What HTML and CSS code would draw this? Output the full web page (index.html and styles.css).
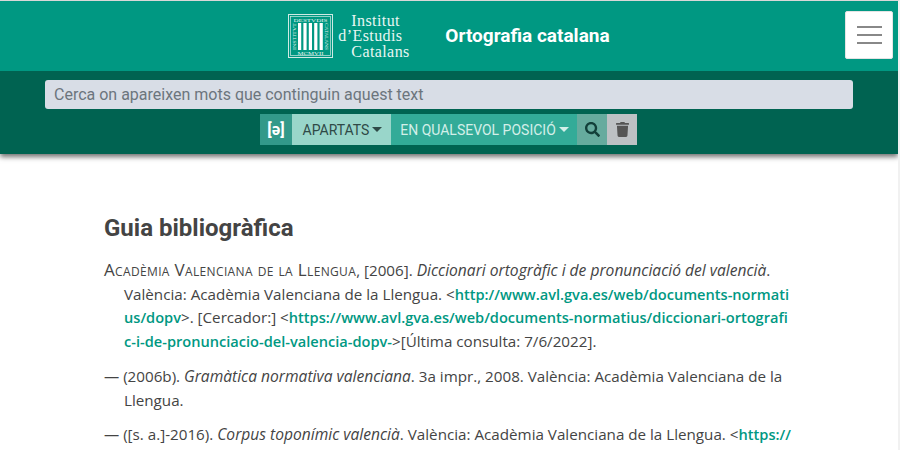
FILE: index.html
```html
<!DOCTYPE html>
<html lang="ca">
<head>
    <meta charset="UTF-8">
    <title>Ortografia catalana</title>
    <link rel="stylesheet" href="styles.css">
</head>
<body>
    <header class="site-header">
        <div class="top-bar">
            <div class="brand">
                <svg class="logo-mark" width="45" height="44" viewBox="0 0 45 44">
                    <rect x="0.5" y="0.5" width="44" height="43" fill="none" stroke="#cfeae4" stroke-width="1"/>
                    <rect x="2.5" y="2.5" width="40" height="39" fill="none" stroke="#cfeae4" stroke-width="0.7"/>
                    <rect x="10" y="9" width="3.200" height="27" fill="#fff"/>
                    <rect x="15.400" y="9" width="3.200" height="27" fill="#fff"/>
                    <rect x="20.800" y="9" width="3.200" height="27" fill="#fff"/>
                    <rect x="26.200" y="9" width="3.200" height="27" fill="#fff"/>
                    <rect x="31.600" y="9" width="3.200" height="27" fill="#fff"/>
                    <text x="22.500" y="8" class="logo-small" text-anchor="middle" textLength="34" lengthAdjust="spacingAndGlyphs">DESTVDIS</text>
                    <text x="22.500" y="41" class="logo-small" text-anchor="middle" textLength="26" lengthAdjust="spacingAndGlyphs">MCMVII</text>
                    <text class="logo-small" text-anchor="middle" textLength="27" lengthAdjust="spacingAndGlyphs" transform="translate(8 22.500) rotate(-90)">INSTITVT</text>
                    <text class="logo-small" text-anchor="middle" textLength="27" lengthAdjust="spacingAndGlyphs" transform="translate(37 22.500) rotate(90)">CATALANS</text>
                </svg>
                <div class="logo-text">
                    <span class="logo-indent">Institut</span>
                    <span>d’Estudis</span>
                    <span class="logo-indent">Catalans</span>
                </div>
                <div class="site-title">Ortografia catalana</div>
            </div>
            <button class="menu-btn" aria-label="Menú">
                <span></span><span></span><span></span>
            </button>
        </div>
        <div class="search-bar">
            <input class="search-input" type="text" placeholder="Cerca on apareixen mots que continguin aquest text">
            <div class="search-tools">
                <button class="tool tool-ipa">[ə]</button>
                <button class="tool tool-sections">APARTATS<i class="caret"></i></button>
                <button class="tool tool-position">EN QUALSEVOL POSICIÓ<i class="caret"></i></button>
                <button class="tool tool-search" aria-label="Cerca">
                    <svg width="15" height="15" viewBox="0 0 512 512"><path fill="currentColor" d="M505 442.700L405.300 343c-4.500-4.500-10.600-7-17-7H372c27.600-35.300 44-79.700 44-128C416 93.100 322.900 0 208 0S0 93.100 0 208s93.100 208 208 208c48.300 0 92.700-16.400 128-44v16.300c0 6.400 2.500 12.500 7 17l99.700 99.700c9.400 9.400 24.600 9.400 33.900 0l28.300-28.300c9.400-9.400 9.400-24.600.1-34zM208 336c-70.700 0-128-57.200-128-128 0-70.700 57.200-128 128-128 70.700 0 128 57.200 128 128 0 70.700-57.200 128-128 128z"/></svg>
                </button>
                <button class="tool tool-clear" aria-label="Esborra">
                    <svg width="13" height="15" viewBox="0 0 448 512"><path fill="currentColor" d="M432 32H312l-9.400-18.700A24 24 0 0 0 281.100 0H166.800a23.700 23.700 0 0 0-21.400 13.300L136 32H16A16 16 0 0 0 0 48v32a16 16 0 0 0 16 16h416a16 16 0 0 0 16-16V48a16 16 0 0 0-16-16zM53.200 467a48 48 0 0 0 47.900 45h245.800a48 48 0 0 0 47.900-45L416 128H32z"/></svg>
                </button>
            </div>
        </div>
    </header>

    <main class="content">
        <h1>Guia bibliogràfica</h1>
        <p class="ref"><span class="author">Acadèmia Valenciana de la Llengua</span>, [2006]. <em>Diccionari ortogràfic i de pronunciació del valencià</em>. València: Acadèmia Valenciana de la Llengua. &lt;<a href="#">http://www.avl.gva.es/web/documents-normati<br>us/dopv</a>&gt;. [Cercador:] &lt;<a href="#">https://www.avl.gva.es/web/documents-normatius/diccionari-ortografi<br>c-i-de-pronunciacio-del-valencia-dopv-</a>&gt;[Última consulta: 7/6/2022].</p>
        <p class="ref">— (2006b). <em>Gramàtica normativa valenciana</em>. 3a impr., 2008. València: Acadèmia Valenciana de la Llengua.</p>
        <p class="ref">— ([s. a.]-2016). <em>Corpus toponímic valencià</em>. València: Acadèmia Valenciana de la Llengua. &lt;<a href="#">https://www.avl.gva.es/</a>&gt;</p>
    </main>
</body>
</html>
```

FILE: styles.css
```css
* {
    box-sizing: border-box;
}
html, body {
    margin: 0;
    height: 450px;
    overflow: hidden;
}
body {
    font-family: "Open Sans", sans-serif;
    background: #fff;
    color: #444;
    border-top: 1px solid #d8d8d8;
    border-right: 2px solid #f1f1f1;
}
.site-header {
    box-shadow: 0 3px 5px rgba(0,0,0,0.55);
}
.top-bar {
    height: 70px;
    background: #009882;
    position: relative;
    display: flex;
    justify-content: center;
}
.brand {
    display: flex;
    align-items: center;
    color: #fff;
}
.logo-mark {
    margin-right: 5px;
}
.logo-small {
    font: 5px "Liberation Serif", serif;
    fill: #e4f4f0;
}
.logo-text {
    font-family: "Liberation Serif", serif;
    font-size: 16px;
    line-height: 15.500px;
    letter-spacing: 0.4px;
    color: #e8f6f3;
    display: flex;
    flex-direction: column;
    width: 72px;
    white-space: nowrap;
}
.logo-indent {
    padding-left: 13px;
}
.site-title {
    font-family: Roboto, sans-serif;
    font-weight: 700;
    font-size: 19px;
    margin-left: 35px;
    padding-bottom: 2px;
}
.menu-btn {
    position: absolute;
    top: 10px;
    right: 5px;
    width: 48px;
    height: 48px;
    background: #fff;
    border: 1px solid #e4e4e4;
    border-radius: 2px;
    display: flex;
    flex-direction: column;
    align-items: center;
    justify-content: center;
    gap: 6px;
    padding: 0;
}
.menu-btn span {
    display: block;
    width: 25px;
    height: 2px;
    background: #888;
}
.search-bar {
    height: 83px;
    background: #006351;
    padding: 9px 45px 0;
    display: flex;
    flex-direction: column;
}
.search-input {
    height: 29px;
    width: 100%;
    border: none;
    border-radius: 3px;
    background: #d8dde6;
    padding: 0 9px;
    font-family: Roboto, sans-serif;
    font-size: 16px;
    outline: none;
}
.search-input::placeholder {
    color: #6c757d;
    opacity: 1;
}
.search-tools {
    display: flex;
    justify-content: center;
    margin-top: 5px;
    padding-right: 1px;
}
.tool {
    height: 31px;
    border: none;
    padding: 0;
    font-family: Roboto, sans-serif;
    font-size: 14px;
    display: flex;
    align-items: center;
    justify-content: center;
}
.tool-ipa {
    width: 32px;
    background: #33998a;
    color: #fff;
    font-weight: 700;
    font-size: 16px;
}
.tool-sections {
    width: 99px;
    padding-left: 2px;
    background: #99d6ca;
    color: #2f4a47;
}
.tool-position {
    width: 186px;
    padding-left: 1px;
    background: #33ab98;
    color: #d4efe9;
}
.tool-search {
    width: 30px;
    background: #66ab9e;
    color: #123f3a;
}
.tool-clear {
    width: 30px;
    background: #bdc1c4;
    color: #555;
}
.caret {
    display: inline-block;
    margin-left: 3px;
    border-top: 5px solid currentColor;
    border-left: 5px solid transparent;
    border-right: 5px solid transparent;
}
.content {
    padding: 0 102px 0 104px;
}
h1 {
    font-family: Roboto, sans-serif;
    font-weight: 700;
    font-size: 24px;
    line-height: 29px;
    margin: 60px 0 15px;
    color: #444;
}
.ref {
    font-size: 15.200px;
    line-height: 23.700px;
    margin: 0 0 11px;
    padding-left: 20px;
    text-indent: -20px;
}
.ref em {
    font-size: 15.600px;
}
.author {
    font-variant: small-caps;
    font-size: 17px;
    letter-spacing: 0.35px;
}
.ref a {
    color: #009882;
    font-weight: 600;
    font-size: 14.600px;
    text-decoration: none;
    word-break: break-all;
}
```
